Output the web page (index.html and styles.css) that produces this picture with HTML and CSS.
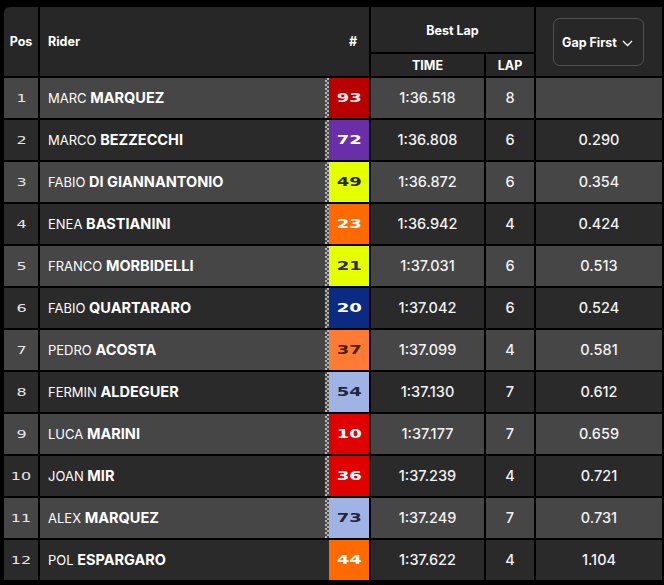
FILE: index.html
```html
<!DOCTYPE html>
<html lang="en">
<head>
<meta charset="utf-8">
<title>Best Lap Classification</title>
<link rel="stylesheet" href="styles.css">
</head>
<body>
<div class="board">
  <div class="head">
    <div class="h-pos">Pos</div>
    <div class="h-rider"><span>Rider</span><span class="h-hash">#</span></div>
    <div class="h-best">Best Lap</div>
    <div class="h-gap"><button class="gap-btn">Gap First <svg width="11" height="7" viewBox="0 0 11 7"><path d="M1 1 L5.5 5.5 L10 1" fill="none" stroke="#fff" stroke-width="1.3"/></svg></button></div>
    <div class="h-time">TIME</div>
    <div class="h-lap">LAP</div>
  </div>

  <div class="row light">
    <div class="pos"><span>1</span></div>
    <div class="rider"><span class="name">MARC <b>MARQUEZ</b></span><span class="flag"></span><span class="num n-red-dark"><span>93</span></span></div>
    <div class="time">1:36.518</div><div class="lap">8</div><div class="gap"></div>
  </div>
  <div class="row dark">
    <div class="pos"><span>2</span></div>
    <div class="rider"><span class="name">MARCO <b>BEZZECCHI</b></span><span class="flag"></span><span class="num n-purple"><span>72</span></span></div>
    <div class="time">1:36.808</div><div class="lap">6</div><div class="gap">0.290</div>
  </div>
  <div class="row light">
    <div class="pos"><span>3</span></div>
    <div class="rider"><span class="name">FABIO <b>DI GIANNANTONIO</b></span><span class="flag"></span><span class="num n-lime"><span>49</span></span></div>
    <div class="time">1:36.872</div><div class="lap">6</div><div class="gap">0.354</div>
  </div>
  <div class="row dark">
    <div class="pos"><span>4</span></div>
    <div class="rider"><span class="name">ENEA <b>BASTIANINI</b></span><span class="flag"></span><span class="num n-orange"><span>23</span></span></div>
    <div class="time">1:36.942</div><div class="lap">4</div><div class="gap">0.424</div>
  </div>
  <div class="row light">
    <div class="pos"><span>5</span></div>
    <div class="rider"><span class="name">FRANCO <b>MORBIDELLI</b></span><span class="flag"></span><span class="num n-lime"><span>21</span></span></div>
    <div class="time">1:37.031</div><div class="lap">6</div><div class="gap">0.513</div>
  </div>
  <div class="row dark">
    <div class="pos"><span>6</span></div>
    <div class="rider"><span class="name">FABIO <b>QUARTARARO</b></span><span class="flag"></span><span class="num n-navy"><span>20</span></span></div>
    <div class="time">1:37.042</div><div class="lap">6</div><div class="gap">0.524</div>
  </div>
  <div class="row light">
    <div class="pos"><span>7</span></div>
    <div class="rider"><span class="name">PEDRO <b>ACOSTA</b></span><span class="flag"></span><span class="num n-ktm"><span>37</span></span></div>
    <div class="time">1:37.099</div><div class="lap">4</div><div class="gap">0.581</div>
  </div>
  <div class="row dark">
    <div class="pos"><span>8</span></div>
    <div class="rider"><span class="name">FERMIN <b>ALDEGUER</b></span><span class="flag"></span><span class="num n-sky"><span>54</span></span></div>
    <div class="time">1:37.130</div><div class="lap">7</div><div class="gap">0.612</div>
  </div>
  <div class="row light">
    <div class="pos"><span>9</span></div>
    <div class="rider"><span class="name">LUCA <b>MARINI</b></span><span class="flag"></span><span class="num n-red"><span>10</span></span></div>
    <div class="time">1:37.177</div><div class="lap">7</div><div class="gap">0.659</div>
  </div>
  <div class="row dark">
    <div class="pos"><span>10</span></div>
    <div class="rider"><span class="name">JOAN <b>MIR</b></span><span class="flag"></span><span class="num n-red"><span>36</span></span></div>
    <div class="time">1:37.239</div><div class="lap">4</div><div class="gap">0.721</div>
  </div>
  <div class="row light">
    <div class="pos"><span>11</span></div>
    <div class="rider"><span class="name">ALEX <b>MARQUEZ</b></span><span class="flag"></span><span class="num n-sky"><span>73</span></span></div>
    <div class="time">1:37.249</div><div class="lap">7</div><div class="gap">0.731</div>
  </div>
  <div class="row dark">
    <div class="pos"><span>12</span></div>
    <div class="rider"><span class="name">POL <b>ESPARGARO</b></span><span class="flag none"></span><span class="num n-orange"><span>44</span></span></div>
    <div class="time">1:37.622</div><div class="lap">4</div><div class="gap">1.104</div>
  </div>
</div>
</body>
</html>
```

FILE: styles.css
```css
* { box-sizing: border-box; }

html, body {
  background: #000;
}

body {
  margin: 7px 0 0 4px;
  font-family: Inter, "Noto Sans", sans-serif;
  color: #fff;
}

.board {
  width: 658px;
  display: flex;
  flex-direction: column;
  gap: 2px;
}

.head,
.row {
  display: grid;
  grid-template-columns: 34px 329px 113px 48px 126px;
  column-gap: 2px;
}

.head {
  grid-template-rows: 45px 22px;
  row-gap: 2px;
  font-size: 12.5px;
  font-weight: 700;
}

.head > div {
  background: #272727;
  display: flex;
  align-items: center;
}

.h-pos {
  grid-row: 1 / 3;
  grid-column: 1;
  justify-content: center;
  border-top-left-radius: 6px;
}

.h-rider {
  grid-row: 1 / 3;
  grid-column: 2;
  justify-content: space-between;
  padding: 0 12px 0 8px;
}

.h-best {
  grid-row: 1;
  grid-column: 3 / 5;
  justify-content: center;
  padding-top: 1px;
}

.h-time {
  grid-row: 2;
  grid-column: 3;
  justify-content: center;
}

.h-lap {
  grid-row: 2;
  grid-column: 4;
  justify-content: center;
}

.h-gap {
  grid-row: 1 / 3;
  grid-column: 5;
  justify-content: flex-start;
  padding-left: 17px;
}

.gap-btn {
  width: 91px;
  height: 48px;
  background: transparent;
  border: 1px solid #505050;
  border-radius: 7px;
  color: #fff;
  font-family: Inter, "Noto Sans", sans-serif;
  font-size: 12.5px;
  font-weight: 700;
  display: flex;
  align-items: center;
  gap: 5px;
  padding: 0 0 0 8px;
  margin-top: 1px;
}

.gap-btn svg {
  margin-top: 3px;
}

.row {
  height: 40px;
}

.row > div {
  display: flex;
  align-items: center;
}

.row.light > div { background: #464646; }
.row.dark > div { background: #2a2a2a; }

.pos {
  justify-content: center;
  font-family: "DejaVu Sans", sans-serif;
  font-size: 11px;
  color: #e6e6e6;
}

.pos span {
  display: inline-block;
  transform: scaleX(1.45);
}

.rider {
  padding-left: 8px;
}

.name {
  flex: 1;
  font-size: 13px;
  font-weight: 400;
  white-space: nowrap;
  padding-bottom: 2px;
}

.name b {
  font-weight: 700;
  font-size: 14.5px;
}

.flag {
  width: 4px;
  height: 100%;
  background: repeating-conic-gradient(#b5b5b5 0 25%, #4a4a4a 0 50%) 0 0 / 4px 4px;
}

.flag.none {
  background: transparent;
}

.num {
  width: 40px;
  height: 100%;
  display: flex;
  align-items: center;
  justify-content: center;
  font-family: "DejaVu Sans", sans-serif;
  font-weight: 700;
  font-size: 12px;
  color: #fff;
}

.num span {
  display: inline-block;
  transform: scaleX(1.5);
}

.n-red-dark { background: #b90000; color: #f3e6e6; }
.n-purple { background: #6b2ea9; }
.n-lime { background: #e3ff00; color: #2a2a14; }
.n-orange { background: #ff6a00; color: #fff; }
.n-navy { background: #0b2b82; }
.n-ktm { background: #ff7b33; color: #4a1e08; }
.n-sky { background: #9fb3e4; color: #1f2740; }
.n-red { background: #e10000; }

.time,
.lap,
.gap {
  justify-content: center;
  font-size: 14.5px;
  font-weight: 500;
  color: #f2f2f2;
  padding-bottom: 2px;
}
```
